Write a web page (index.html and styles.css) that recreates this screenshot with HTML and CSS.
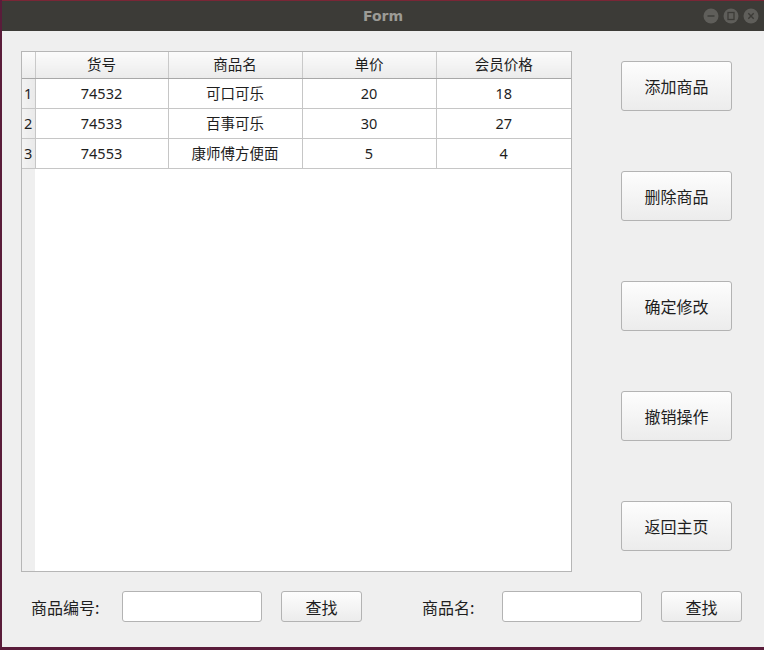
FILE: index.html
```html
<!DOCTYPE html>
<html lang="zh">
<head>
<meta charset="utf-8">
<title>Form</title>
<link rel="stylesheet" href="styles.css">
</head>
<body>
<div class="window">
  <div class="titlebar">
    <span class="title">Form</span>
    <div class="wctl">
      <span class="wbtn"><svg width="16" height="16" viewBox="0 0 16 16"><circle cx="8" cy="8" r="7.5" fill="#5f5e5a"/><path d="M4.5 8h7" stroke="#3c3b37" stroke-width="1.4"/></svg></span>
      <span class="wbtn"><svg width="16" height="16" viewBox="0 0 16 16"><circle cx="8" cy="8" r="7.5" fill="#5f5e5a"/><rect x="5" y="4.5" width="6" height="7" fill="none" stroke="#3c3b37" stroke-width="1.3"/></svg></span>
      <span class="wbtn"><svg width="16" height="16" viewBox="0 0 16 16"><circle cx="8" cy="8" r="7.5" fill="#5f5e5a"/><path d="M5.3 5.3l5.4 5.4M10.7 5.3l-5.4 5.4" stroke="#3c3b37" stroke-width="1.4"/></svg></span>
    </div>
  </div>
  <div class="content">
    <div class="main">
      <div class="tablebox">
        <table class="grid">
          <colgroup>
            <col class="c0"><col class="c1"><col class="c2"><col class="c3"><col class="c4">
          </colgroup>
          <thead>
            <tr><th class="corner"></th><th>货号</th><th>商品名</th><th>单价</th><th>会员价格</th></tr>
          </thead>
          <tbody>
            <tr><td class="rh">1</td><td>74532</td><td>可口可乐</td><td>20</td><td>18</td></tr>
            <tr><td class="rh">2</td><td>74533</td><td>百事可乐</td><td>30</td><td>27</td></tr>
            <tr><td class="rh">3</td><td>74553</td><td>康师傅方便面</td><td>5</td><td>4</td></tr>
          </tbody>
        </table>
      </div>
      <div class="actions">
        <button class="btn big">添加商品</button>
        <button class="btn big">删除商品</button>
        <button class="btn big">确定修改</button>
        <button class="btn big">撤销操作</button>
        <button class="btn big">返回主页</button>
      </div>
    </div>
    <div class="search">
      <label class="lbl l1">商品编号:</label>
      <input class="field" type="text">
      <button class="btn small">查找</button>
      <label class="lbl l2">商品名:</label>
      <input class="field" type="text">
      <button class="btn small">查找</button>
    </div>
  </div>
</div>
</body>
</html>
```
FILE: styles.css
```css
* { box-sizing: border-box; }
html, body { margin: 0; padding: 0; }
body {
  width: 764px;
  height: 650px;
  background: #5a1c3a;
  overflow: hidden;
  font-family: "Noto Sans", "Noto Sans CJK SC", sans-serif;
  color: #1e1e1e;
}
.window {
  margin-left: 2px;
  width: 762px;
  height: 647px;
  display: flex;
  flex-direction: column;
  background: #efefef;
}
.titlebar {
  height: 31px;
  background: #3c3b37;
  border-top: 1px solid #7a2636;
  position: relative;
  display: flex;
  align-items: center;
  justify-content: center;
}
.title {
  color: #9c9b96;
  font-weight: bold;
  font-size: 14px;
  font-family: "DejaVu Sans", sans-serif;
}
.wctl {
  position: absolute;
  right: 5px;
  top: 7px;
  display: flex;
  gap: 4px;
}
.wbtn { display: block; width: 16px; height: 16px; }
.wbtn svg { display: block; }
.content {
  flex: 1;
  padding: 20px 0 0 19px;
  display: flex;
  flex-direction: column;
}
.main {
  display: flex;
  height: 521px;
}
.tablebox {
  width: 551px;
  height: 521px;
  border: 1px solid #b6b6b6;
  background: linear-gradient(to right, #efefef 0 13px, #ffffff 13px);
}
.grid {
  border-collapse: collapse;
  table-layout: fixed;
  width: 549px;
  font-size: 14.5px;
}
.c0 { width: 13px; }
.c1 { width: 133px; }
.c2 { width: 134px; }
.c3 { width: 134px; }
.c4 { width: 135px; }
.grid th {
  height: 26px;
  padding: 0;
  font-weight: normal;
  background: linear-gradient(#fbfbfb, #ebebeb);
  border-right: 1px solid #c9c9c9;
  border-bottom: 1px solid #a8a8a8;
  text-align: center;
  line-height: 25px;
}
.grid th:last-child { border-right: none; }
.grid td {
  height: 30px;
  padding: 0;
  text-align: center;
  border-right: 1px solid #c6c6c6;
  border-bottom: 1px solid #c6c6c6;
  background: #ffffff;
  line-height: 28px;
}
.grid td:last-child { border-right: none; }
.grid td.rh {
  background: linear-gradient(to right, #f3f3f3, #e9e9e9);
  text-align: left;
  padding-left: 2px;
  border-right: 1px solid #c6c6c6;
}
.actions {
  margin-left: 49px;
  padding-top: 10px;
  display: flex;
  flex-direction: column;
  gap: 60px;
}
.btn {
  font-family: "Noto Sans CJK SC", "Noto Sans", sans-serif;
  color: #1e1e1e;
  background: linear-gradient(#fdfdfd, #ececec);
  border: 1px solid #b3b3b3;
  border-radius: 3px;
  padding: 0;
}
.big {
  width: 111px;
  height: 50px;
  font-size: 16px;
}
.search {
  display: flex;
  align-items: center;
  margin-top: 19px;
  height: 31px;
}
.lbl {
  font-family: "Noto Sans CJK SC", "Noto Sans", sans-serif;
  font-size: 16px;
  color: #1e1e1e;
}
.l1 { margin-left: 10px; width: 91px; }
.l2 { margin-left: 60px; width: 80px; }
.field {
  width: 140px;
  height: 31px;
  border: 1px solid #b3b3b3;
  border-radius: 3px;
  background: #ffffff;
  margin: 0;
}
.small {
  width: 81px;
  height: 31px;
  font-size: 16px;
  margin-left: 19px;
}
```
